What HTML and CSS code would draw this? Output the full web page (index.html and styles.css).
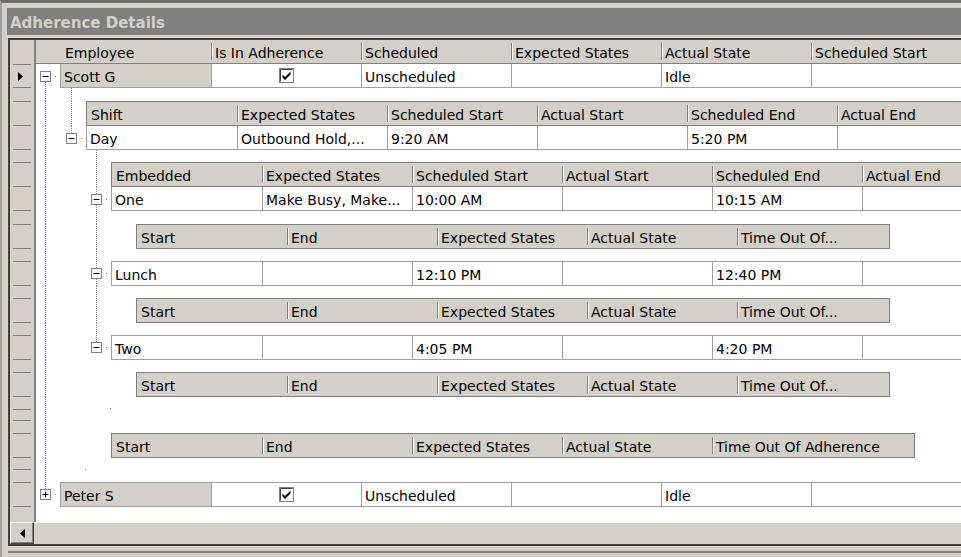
FILE: index.html
```html
<!DOCTYPE html>
<html>
<head>
    <title>Adherence Details</title>
    <link rel="stylesheet" href="styles.css">
</head>
<body>
<div class="window">
    <div class="caption">Adherence Details</div>

    <div class="grid">
        <div class="rows">

            <!-- column headers -->
            <div class="ln">
                <div class="sel"></div>
                <div class="hdr-root">
                    <div class="h">Employee</div>
                    <div class="h">Is In Adherence</div>
                    <div class="h">Scheduled</div>
                    <div class="h">Expected States</div>
                    <div class="h">Actual State</div>
                    <div class="h">Scheduled Start</div>
                </div>
            </div>

            <!-- Scott G -->
            <div class="ln">
                <div class="sel rl"><svg class="arrow" width="5" height="9" viewBox="0 0 5 9"><path d="M0 0l5 4.5L0 9z" fill="#000"/></svg></div>
                <div class="t t0 down">
                    <svg class="exp" width="11" height="11" viewBox="0 0 11 11"><rect x="0.5" y="0.5" width="10" height="10" fill="#fff" stroke="#808080"/><path d="M2.5 5.5h6" stroke="#000"/></svg>
                    <i class="stub"></i>
                </div>
                <div class="row">
                    <div class="c key">Scott G</div>
                    <div class="c mid"><svg width="15" height="15" viewBox="0 0 15 15"><rect x="0.5" y="0.5" width="14" height="14" fill="#fff" stroke="#808080"/><path d="M1.5 13.5V1.5h12" stroke="#404040" fill="none"/><path d="M3.5 6.5l2.5 2.5 5.5-5.5v3l-5.5 5.5-2.5-2.5z" fill="#000"/></svg></div>
                    <div class="c">Unscheduled</div>
                    <div class="c"></div>
                    <div class="c">Idle</div>
                    <div class="c"></div>
                </div>
            </div>

            <div class="ln gap g13">
                <div class="sel"></div>
                <div class="t t0 pipe"></div>
                <div class="t t1 pipe"></div>
            </div>

            <!-- Shift band -->
            <div class="ln">
                <div class="sel rl"></div>
                <div class="t t0 pipe"></div>
                <div class="t t1 pipe"></div>
                <div class="hb">
                    <div class="h">Shift</div>
                    <div class="h">Expected States</div>
                    <div class="h">Scheduled Start</div>
                    <div class="h">Actual Start</div>
                    <div class="h">Scheduled End</div>
                    <div class="h">Actual End</div>
                </div>
            </div>

            <div class="ln">
                <div class="sel rb"></div>
                <div class="t t0 pipe"></div>
                <div class="t t1 up">
                    <svg class="exp" width="11" height="11" viewBox="0 0 11 11"><rect x="0.5" y="0.5" width="10" height="10" fill="#fff" stroke="#808080"/><path d="M2.5 5.5h6" stroke="#000"/></svg>
                    <i class="stub"></i>
                </div>
                <div class="row">
                    <div class="c">Day</div>
                    <div class="c">Outbound Hold,...</div>
                    <div class="c">9:20 AM</div>
                    <div class="c"></div>
                    <div class="c">5:20 PM</div>
                    <div class="c"></div>
                </div>
            </div>

            <div class="ln gap">
                <div class="sel"></div>
                <div class="t t0 pipe"></div>
                <div class="t t1"></div>
                <div class="t t2 pipe"></div>
            </div>

            <!-- Embedded band -->
            <div class="ln">
                <div class="sel rl"></div>
                <div class="t t0 pipe"></div>
                <div class="t t1"></div>
                <div class="t t2 pipe"></div>
                <div class="hb">
                    <div class="h">Embedded</div>
                    <div class="h">Expected States</div>
                    <div class="h">Scheduled Start</div>
                    <div class="h">Actual Start</div>
                    <div class="h">Scheduled End</div>
                    <div class="h">Actual End</div>
                </div>
            </div>

            <div class="ln">
                <div class="sel rb"></div>
                <div class="t t0 pipe"></div>
                <div class="t t1"></div>
                <div class="t t2 pipe">
                    <svg class="exp" width="11" height="11" viewBox="0 0 11 11"><rect x="0.5" y="0.5" width="10" height="10" fill="#fff" stroke="#808080"/><path d="M2.5 5.5h6" stroke="#000"/></svg>
                    <i class="stub"></i>
                </div>
                <div class="row">
                    <div class="c">One</div>
                    <div class="c">Make Busy, Make...</div>
                    <div class="c">10:00 AM</div>
                    <div class="c"></div>
                    <div class="c">10:15 AM</div>
                    <div class="c"></div>
                </div>
            </div>

            <div class="ln gap g13">
                <div class="sel"></div>
                <div class="t t0 pipe"></div>
                <div class="t t1"></div>
                <div class="t t2 pipe"></div>
            </div>

            <div class="ln">
                <div class="sel rl"></div>
                <div class="t t0 pipe"></div>
                <div class="t t1"></div>
                <div class="t t2 pipe"></div>
                <div class="t t3"></div>
                <div class="hb">
                    <div class="h">Start</div>
                    <div class="h">End</div>
                    <div class="h">Expected States</div>
                    <div class="h">Actual State</div>
                    <div class="h w152">Time Out Of...</div>
                </div>
            </div>

            <div class="ln gap">
                <div class="sel"></div>
                <div class="t t0 pipe"></div>
                <div class="t t1"></div>
                <div class="t t2 pipe"></div>
            </div>

            <!-- Lunch -->
            <div class="ln">
                <div class="sel rl"></div>
                <div class="t t0 pipe"></div>
                <div class="t t1"></div>
                <div class="t t2 pipe">
                    <svg class="exp" width="11" height="11" viewBox="0 0 11 11"><rect x="0.5" y="0.5" width="10" height="10" fill="#fff" stroke="#808080"/><path d="M2.5 5.5h6" stroke="#000"/></svg>
                    <i class="stub"></i>
                </div>
                <div class="row solo">
                    <div class="c">Lunch</div>
                    <div class="c"></div>
                    <div class="c">12:10 PM</div>
                    <div class="c"></div>
                    <div class="c">12:40 PM</div>
                    <div class="c"></div>
                </div>
            </div>

            <div class="ln gap">
                <div class="sel"></div>
                <div class="t t0 pipe"></div>
                <div class="t t1"></div>
                <div class="t t2 pipe"></div>
            </div>

            <div class="ln">
                <div class="sel rl"></div>
                <div class="t t0 pipe"></div>
                <div class="t t1"></div>
                <div class="t t2 pipe"></div>
                <div class="t t3"></div>
                <div class="hb">
                    <div class="h">Start</div>
                    <div class="h">End</div>
                    <div class="h">Expected States</div>
                    <div class="h">Actual State</div>
                    <div class="h w152">Time Out Of...</div>
                </div>
            </div>

            <div class="ln gap">
                <div class="sel"></div>
                <div class="t t0 pipe"></div>
                <div class="t t1"></div>
                <div class="t t2 pipe"></div>
            </div>

            <!-- Two -->
            <div class="ln">
                <div class="sel rl"></div>
                <div class="t t0 pipe"></div>
                <div class="t t1"></div>
                <div class="t t2 up">
                    <svg class="exp" width="11" height="11" viewBox="0 0 11 11"><rect x="0.5" y="0.5" width="10" height="10" fill="#fff" stroke="#808080"/><path d="M2.5 5.5h6" stroke="#000"/></svg>
                    <i class="stub"></i>
                </div>
                <div class="row solo">
                    <div class="c">Two</div>
                    <div class="c"></div>
                    <div class="c">4:05 PM</div>
                    <div class="c"></div>
                    <div class="c">4:20 PM</div>
                    <div class="c"></div>
                </div>
            </div>

            <div class="ln gap">
                <div class="sel"></div>
                <div class="t t0 pipe"></div>
            </div>

            <div class="ln">
                <div class="sel rl"></div>
                <div class="t t0 pipe"></div>
                <div class="t t1"></div>
                <div class="t t2"></div>
                <div class="t t3"></div>
                <div class="hb">
                    <div class="h">Start</div>
                    <div class="h">End</div>
                    <div class="h">Expected States</div>
                    <div class="h">Actual State</div>
                    <div class="h w152">Time Out Of...</div>
                </div>
            </div>

            <div class="ln gap">
                <div class="sel"></div>
                <div class="t t0 pipe"></div>
                <div class="t t1"></div>
                <div class="t t2 dot"></div>
            </div>
            <div class="ln thin">
                <div class="sel rl"></div>
                <div class="t t0 pipe"></div>
            </div>
            <div class="ln gap">
                <div class="sel"></div>
                <div class="t t0 pipe"></div>
            </div>

            <!-- second shift band -->
            <div class="ln">
                <div class="sel rl"></div>
                <div class="t t0 pipe"></div>
                <div class="t t1"></div>
                <div class="t t2"></div>
                <div class="hb">
                    <div class="h">Start</div>
                    <div class="h">End</div>
                    <div class="h">Expected States</div>
                    <div class="h">Actual State</div>
                    <div class="h w202">Time Out Of Adherence</div>
                </div>
            </div>

            <div class="ln gap">
                <div class="sel rb"></div>
                <div class="t t0 pipe"></div>
                <div class="t t1 dot"></div>
            </div>
            <div class="ln gap">
                <div class="sel"></div>
                <div class="t t0 pipe"></div>
            </div>

            <!-- Peter S -->
            <div class="ln">
                <div class="sel rl"></div>
                <div class="t t0 up">
                    <svg class="exp" width="11" height="11" viewBox="0 0 11 11"><rect x="0.5" y="0.5" width="10" height="10" fill="#fff" stroke="#808080"/><path d="M2.5 5.5h6M5.5 2.5v6" stroke="#000"/></svg>
                    <i class="stub"></i>
                </div>
                <div class="row solo">
                    <div class="c key">Peter S</div>
                    <div class="c mid"><svg width="15" height="15" viewBox="0 0 15 15"><rect x="0.5" y="0.5" width="14" height="14" fill="#fff" stroke="#808080"/><path d="M1.5 13.5V1.5h12" stroke="#404040" fill="none"/><path d="M3.5 6.5l2.5 2.5 5.5-5.5v3l-5.5 5.5-2.5-2.5z" fill="#000"/></svg></div>
                    <div class="c">Unscheduled</div>
                    <div class="c"></div>
                    <div class="c">Idle</div>
                    <div class="c"></div>
                </div>
            </div>

            <div class="ln fill">
                <div class="sel"></div>
            </div>
        </div>

        <div class="hscroll">
            <div class="sbtn"><svg width="5" height="9" viewBox="0 0 5 9"><path d="M5 0v9L0 4.5z" fill="#000"/></svg></div>
            <div class="strack"></div>
        </div>
    </div>

    <div class="foot"></div>
</div>
</body>
</html>
```

FILE: styles.css
```css
* {
    margin: 0;
    padding: 0;
    box-sizing: border-box;
}

body {
    font-family: 'DejaVu Sans', sans-serif;
    font-size: 14px;
    color: #000;
    background: #d4d0c8;
    width: 961px;
    height: 557px;
    overflow: hidden;
}

.window {
    width: 1200px;
    height: 557px;
    border-top: 3px solid #6e6e6e;
    border-left: 2px solid #a0a0a0;
    padding: 5px 0 0 6px;
}

.caption {
    height: 27px;
    margin-left: -1px;
    padding: 3px 0 0 3px;
    display: flex;
    align-items: center;
    background: #808080;
    color: #d4d0c8;
    font-size: 15px;
    font-weight: bold;
}

.grid {
    margin-top: 3px;
    border: 2px solid #404040;
    background: #fff;
}

.rows {
    height: 482px;
    overflow: hidden;
    display: flex;
    flex-direction: column;
}

/* one line of the tree: row selector, tree gutter, band */
.ln {
    display: flex;
    flex: none;
}

.gap {
    height: 12px;
}

.g13 {
    height: 13px;
}

.thin {
    height: 12px;
}

.fill {
    flex: 1;
}

.sel {
    flex: none;
    width: 26px;
    padding-left: 8px;
    display: flex;
    align-items: center;
    background: #d4d0c8;
    border-right: 2px solid #808080;
}

.sel.rl {
    background:
        linear-gradient(#808080, #808080) 3px 0 / 18px 1px no-repeat,
        linear-gradient(#808080, #808080) 3px 100% / 18px 1px no-repeat,
        #d4d0c8;
}

.sel.rb {
    background:
        linear-gradient(#808080, #808080) 3px 100% / 18px 1px no-repeat,
        #d4d0c8;
}

/* tree gutter tracks */
.t {
    flex: none;
    display: flex;
    align-items: center;
}

.t0 { width: 24px; --x: 9px; }
.t1 { width: 26px; --x: 11px; }
.t2 { width: 25px; --x: 10px; }
.t3 { width: 25px; --x: 10px; }

.pipe {
    background: repeating-linear-gradient(#808080 0 1px, transparent 1px 2px) var(--x) 0 / 1px 100% no-repeat;
}

.up {
    background: repeating-linear-gradient(#808080 0 1px, transparent 1px 2px) var(--x) 0 / 1px 50% no-repeat;
}

.down {
    background: repeating-linear-gradient(#808080 0 1px, transparent 1px 2px) var(--x) 100% / 1px 50% no-repeat;
}

.dot {
    background: linear-gradient(#808080, #808080) 100% 100% / 1px 1px no-repeat;
}

.exp {
    flex: none;
    margin-left: calc(var(--x) - 5px);
}

.stub {
    width: 1px;
    height: 1px;
    margin-left: 4px;
    background: #808080;
}

/* header bands */
.hdr-root {
    flex: none;
    display: flex;
    height: 24px;
    padding-left: 25px;
    background: #d4d0c8;
    border-bottom: 1px solid #808080;
}

.hb {
    flex: none;
    display: flex;
    height: 25px;
    background: #d4d0c8;
    border: 1px solid #808080;
}

.h {
    flex: none;
    width: 150px;
    padding: 3px 0 0 4px;
    display: flex;
    align-items: center;
    white-space: nowrap;
    overflow: hidden;
    background:
        linear-gradient(#808080, #808080) 0 3px / 1px calc(100% - 6px) no-repeat,
        linear-gradient(#fff, #fff) 1px 3px / 1px calc(100% - 6px) no-repeat;
}

.h:first-child {
    background: none;
}

.h.w152 {
    width: 152px;
}

.h.w202 {
    width: 202px;
}

/* data rows */
.row {
    flex: none;
    display: flex;
    height: 24px;
    background: #fff;
    border-left: 1px solid #a0a0a0;
    border-bottom: 1px solid #a0a0a0;
}

.row.solo {
    height: 25px;
    border-top: 1px solid #a0a0a0;
}

.c {
    flex: none;
    width: 150px;
    padding: 2px 0 0 3px;
    display: flex;
    align-items: center;
    white-space: nowrap;
    overflow: hidden;
    border-right: 1px solid #a0a0a0;
}

.c:first-child {
    width: 151px;
}

.c.key {
    background: #d4d0c8;
}

.c.mid {
    justify-content: center;
    padding: 0;
}

/* horizontal scroll bar */
.hscroll {
    display: flex;
    height: 22px;
    background: #d4d0c8;
}

.sbtn {
    flex: none;
    width: 24px;
    display: flex;
    align-items: center;
    justify-content: center;
    border-top: 1px solid #fff;
    border-left: 1px solid #fff;
    border-right: 1px solid #404040;
    border-bottom: 1px solid #404040;
    box-shadow: inset -1px -1px #808080;
}

.strack {
    flex: 1;
    border-top: 1px solid #fff;
}

.foot {
    margin-top: 5px;
    height: 6px;
    border-top: 2px solid #808080;
}
```
